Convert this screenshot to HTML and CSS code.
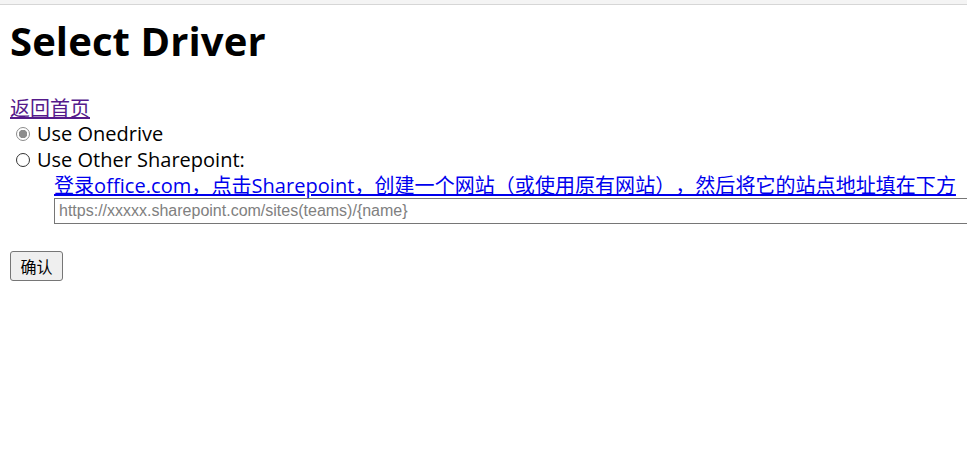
FILE: index.html
```html
<!DOCTYPE html>
<html lang="zh">
<head>
<meta charset="utf-8">
<title>Select Driver</title>
<link rel="stylesheet" href="styles.css">
</head>
<body>
<div class="topbar"></div>
<main class="page">
  <h1 class="title">Select Driver</h1>
  <form class="form">
    <a class="home" href="#">返回首页</a>
    <label class="option"><input class="radio" type="radio" name="drive" checked> Use Onedrive</label>
    <label class="option"><input class="radio" type="radio" name="drive"> Use Other Sharepoint:</label>
    <div class="sub">
      <a class="guide" href="#">登录office.com，点击Sharepoint，创建一个网站（或使用原有网站），然后将它的站点地址填在下方</a>
      <input class="url" type="text" placeholder="https://xxxxx.sharepoint.com/sites(teams)/{name}">
    </div>
    <button class="submit" type="button">确认</button>
  </form>
</main>
</body>
</html>
```

FILE: styles.css
```css
html { overflow: hidden; }
body {
  margin: 0;
  font-family: "Open Sans", "Noto Sans CJK SC", sans-serif;
  font-size: 20px;
  color: #000;
  background: #fff;
  text-spacing-trim: space-all;
}
.topbar {
  height: 4px;
  background: #f4f4f4;
  border-bottom: 1px solid #d6d6d6;
}
.page {
  padding: 0 10px;
}
.title {
  margin: 12px 0 30px;
  font-size: 40px;
  font-weight: 700;
  line-height: 48px;
  letter-spacing: 0.1px;
}
.form {
  display: flex;
  flex-direction: column;
  align-items: flex-start;
}
.home {
  color: #551a8b;
  font-family: "Noto Sans CJK SC", sans-serif;
  line-height: 26px;
}
.option {
  display: flex;
  align-items: center;
  line-height: 26px;
  padding-left: 6px;
}
.radio {
  appearance: none;
  -webkit-appearance: none;
  box-sizing: border-box;
  margin: 0 7px 0 0;
  width: 14px;
  height: 14px;
  border: 1px solid #333;
  border-radius: 50%;
  background: #fff;
}
.radio:checked {
  border-color: #8c8c8c;
  background: radial-gradient(circle, #8c8c8c 0 4px, #fff 4.5px);
}
.sub {
  margin-left: 44px;
  display: flex;
  flex-direction: column;
  align-items: flex-start;
}
.guide {
  color: #0000ee;
  line-height: 25px;
  white-space: nowrap;
  letter-spacing: 0.05px;
}
.url {
  width: 1000px;
  height: 26px;
  box-sizing: border-box;
  border: 1px solid #767676;
  padding: 1px 4px;
  font-family: "Liberation Sans", Arial, sans-serif;
  font-size: 16px;
  margin: 0;
}
.url::placeholder { color: #808080; }
.submit {
  margin-top: 27px;
  width: 53px;
  height: 30px;
  padding: 0;
  font-family: "Noto Sans CJK SC", sans-serif;
  font-size: 16px;
  background: #efefef;
  border: 1px solid #767676;
  border-radius: 3px;
  color: #000;
}
```
